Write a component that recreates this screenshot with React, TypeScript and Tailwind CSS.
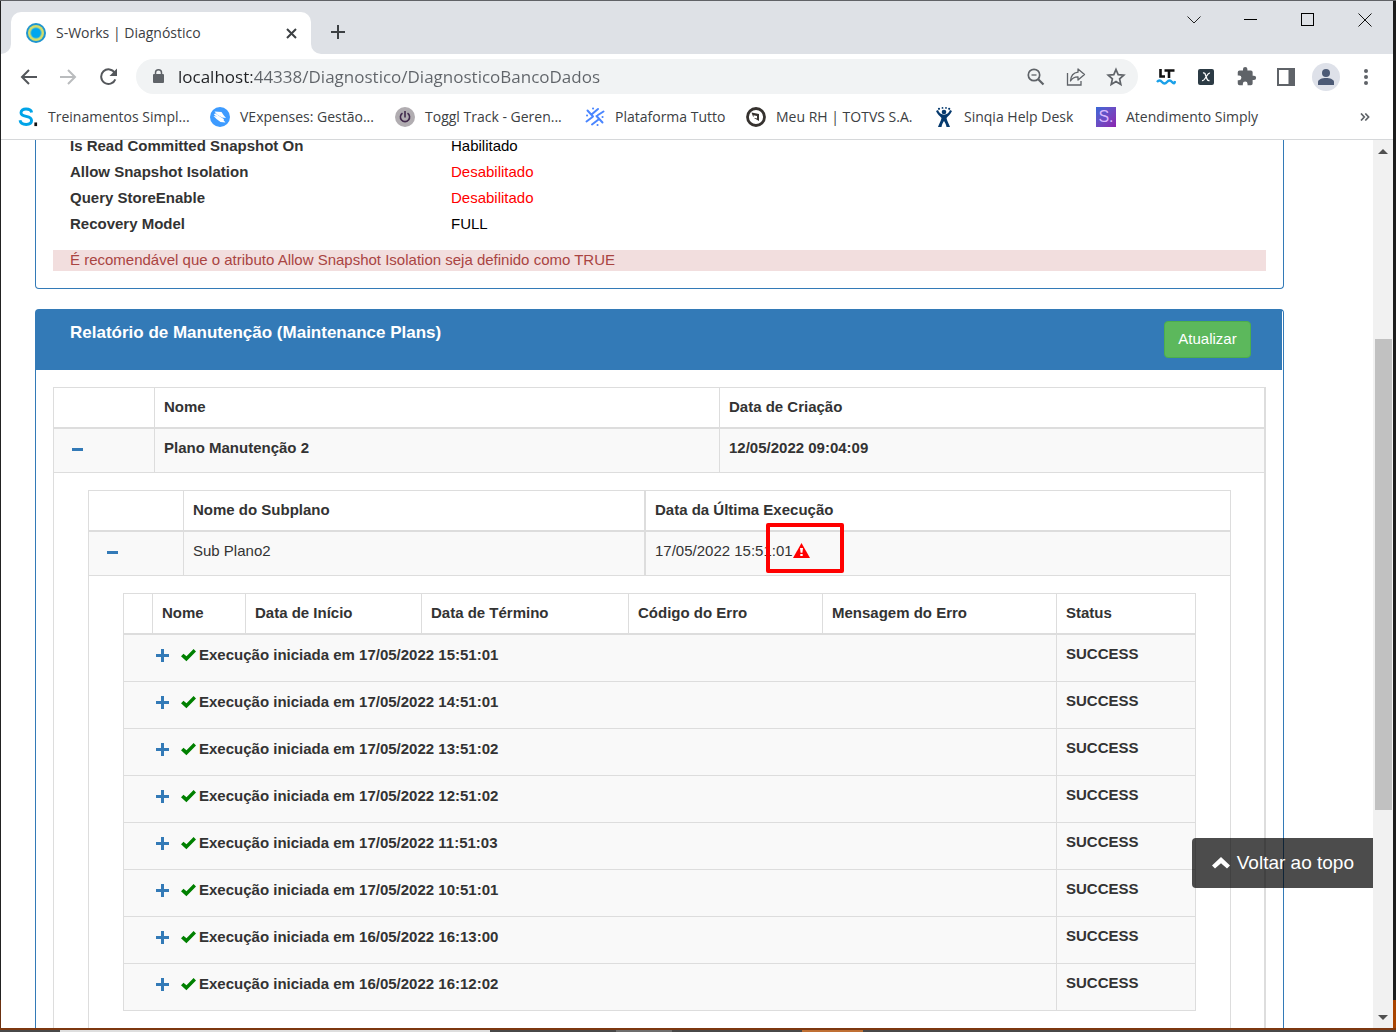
import { useState } from 'react';
import type { ReactNode } from 'react';

const executions = [
  '17/05/2022 15:51:01',
  '17/05/2022 14:51:01',
  '17/05/2022 13:51:02',
  '17/05/2022 12:51:02',
  '17/05/2022 11:51:03',
  '17/05/2022 10:51:01',
  '16/05/2022 16:13:00',
  '16/05/2022 16:12:02',
];

const settings = [
  { label: 'Is Read Committed Snapshot On', value: 'Habilitado', ok: true },
  { label: 'Allow Snapshot Isolation', value: 'Desabilitado', ok: false },
  { label: 'Query StoreEnable', value: 'Desabilitado', ok: false },
  { label: 'Recovery Model', value: 'FULL', ok: true },
];

/* ---------- bookmark icons ---------- */

function SimplIcon() {
  return (
    <svg width="22" height="22" viewBox="0 0 22 22" fill="none">
      <path d="M15 6C14.5 3.400 12 2.200 8.800 2.200C5.500 2.200 3.300 3.700 3.300 6.200C3.300 8.900 5.700 9.600 9 10.300C12.600 11 14.900 12 14.900 14.900C14.900 17.800 12.300 19.200 9 19.200C5.400 19.200 2.700 17.700 2.200 14.700" stroke="#00a4e8" strokeWidth="3.200" />
      <rect x="18" y="17" width="3" height="4" fill="#111" />
    </svg>
  );
}

function VExpensesIcon() {
  return (
    <svg width="20" height="20" viewBox="0 0 20 20">
      <circle cx="10" cy="10" r="10" fill="#3d9bff" />
      <path d="M4.500 4.500l7 .5 2 3 2.500 3-4-.5-5-3zM3.500 9l4 .5 5 2.500 3 3.500-5-.5-4-3z" fill="#fff" />
      <path d="M4.500 7l9 6" stroke="#fff" strokeWidth="2" />
    </svg>
  );
}

function TogglIcon() {
  return (
    <svg width="20" height="20" viewBox="0 0 20 20" fill="none">
      <circle cx="10" cy="10" r="10" fill="#b1adb1" />
      <path d="M7.500 6.200a4.600 4.600 0 1 0 5 0M10 4v6.500" stroke="#412a4c" strokeWidth="1.600" />
    </svg>
  );
}

function TuttoIcon() {
  return (
    <svg width="20" height="20" viewBox="0 0 20 20" fill="none" stroke="#4a86ff" strokeWidth="2" strokeLinecap="round">
      <path d="M6.500 7.500L13 2M2.500 3.500L8 9.500M1.500 14.500L7.500 10M7 17.500l6.500-5M11.500 9l6 6.500M13 8l5.500-3.500" />
      <path d="M8 1.500h.1M17.500 10h.1M2 8.500h.1M12.500 18h.1" />
    </svg>
  );
}

function TotvsIcon() {
  return (
    <svg width="20" height="20" viewBox="0 0 20 20" fill="none">
      <circle cx="10" cy="10" r="8.500" stroke="#36322f" strokeWidth="2.800" />
      <path d="M5.500 5.500L13 7v3.500L7 9.500zM13 8v6l-5-3z" fill="#36322f" />
      <path d="M7.500 8.200l3.500.8v2.500l-3-.7z" fill="#fff" />
    </svg>
  );
}

function SinqiaIcon() {
  return (
    <svg width="20" height="20" viewBox="0 0 20 20" fill="#063a6e">
      <circle cx="10" cy="5" r="2.300" />
      <circle cx="5" cy="1.800" r="1.100" />
      <circle cx="8.500" cy=".9" r=".9" />
      <circle cx="12" cy=".9" r=".9" />
      <circle cx="15.200" cy="1.800" r="1.100" />
      <path d="M2 4c1 3 4 5 5.500 7C7 14 5 17 4 20h3.500c.5-3 1.500-4.500 2.500-6 1 1.500 2 3 2.500 6H16c-1-3-3-6-3.500-9C14 9 17 7 18 4l-2-1c-1 3-3.500 4.500-6 4.800C7.500 7.500 5 6 4 3z" />
    </svg>
  );
}

function AtendimentoIcon() {
  return (
    <span className="flex h-5 w-5 items-center justify-center bg-linear-to-br from-[#3367d6] to-[#8b1fb0] font-['Liberation_Sans',sans-serif] text-base text-[#d9b8ff]">
      S.
    </span>
  );
}

const bookmarks = [
  { label: 'Treinamentos Simpl...', icon: <SimplIcon />, width: 'w-[192px]' },
  { label: 'VExpenses: Gestão...', icon: <VExpensesIcon />, width: 'w-[185px]' },
  { label: 'Toggl Track - Geren...', icon: <TogglIcon />, width: 'w-[190px]' },
  { label: 'Plataforma Tutto', icon: <TuttoIcon />, width: 'w-[161px]' },
  { label: 'Meu RH | TOTVS S.A.', icon: <TotvsIcon />, width: 'w-[188px]' },
  { label: 'Sinqia Help Desk', icon: <SinqiaIcon />, width: 'w-[162px]' },
  { label: 'Atendimento Simply', icon: <AtendimentoIcon />, width: 'w-[170px]' },
];

/* ---------- page icons ---------- */

function MinusIcon() {
  return (
    <svg width="11" height="14" viewBox="0 0 11 14" fill="#337ab7">
      <rect y="6" width="11" height="3" />
    </svg>
  );
}

function PlusIcon() {
  return (
    <svg width="13" height="13" viewBox="0 0 13 13" fill="#337ab7">
      <path d="M5 0h3v5h5v3H8v5H5V8H0V5h5z" />
    </svg>
  );
}

function CheckIcon() {
  return (
    <svg width="15" height="13" viewBox="0 0 15 13" fill="#008000">
      <path d="M12.600 0L15 2.400 5.400 12.300 0 7.300l2.500-2.600 3 2.500z" />
    </svg>
  );
}

function WarningIcon() {
  return (
    <svg width="17" height="15" viewBox="0 0 17 15">
      <path d="M8.500 0L17 15H0z" fill="#f00" />
      <path d="M7 5h3l-.6 4.800H7.600zM7.300 11h2.400v2H7.300z" fill="#fff" />
    </svg>
  );
}

/* ---------- browser chrome ---------- */

function IconButton({ label, children, className = '' }: { label: string; children: ReactNode; className?: string }) {
  return (
    <button type="button" aria-label={label} className={`flex h-9 w-10 shrink-0 items-center justify-center ${className}`}>
      {children}
    </button>
  );
}

function TabStrip() {
  return (
    <div className="flex h-[53px] shrink-0 items-start bg-[#dee1e6]">
      <div className="flex h-full items-end">
        <div className="h-[10px] w-[10px] bg-white">
          <div className="h-full w-full rounded-br-[10px] bg-[#dee1e6]" />
        </div>
        <div className="flex h-[42px] w-[300px] items-center rounded-t-[10px] bg-white pl-[15px] pr-[10px]">
          <svg width="20" height="20" viewBox="0 0 20 20">
            <circle cx="10" cy="10" r="10" fill="#1f95cf" />
            <circle cx="10" cy="10" r="8" fill="#d3dd6a" />
            <circle cx="10" cy="10" r="5.800" fill="#5fbfc0" />
            <circle cx="10" cy="10" r="4.800" fill="#00a6ee" />
          </svg>
          <span className="grow pl-[10px] text-sm text-[#3c4043]">S-Works | Diagnóstico</span>
          <button type="button" aria-label="Fechar guia" className="flex h-5 w-5 items-center justify-center">
            <svg width="11" height="11" viewBox="0 0 11 11" stroke="#3c4043" strokeWidth="2">
              <path d="M1 1l9 9M10 1l-9 9" />
            </svg>
          </button>
        </div>
        <div className="h-[10px] w-[10px] bg-white">
          <div className="h-full w-full rounded-bl-[10px] bg-[#dee1e6]" />
        </div>
      </div>
      <button type="button" aria-label="Nova guia" className="mt-5 ml-1 flex h-[22px] w-[26px] items-center justify-center">
        <svg width="16" height="16" viewBox="0 0 16 16" stroke="#3c4043" strokeWidth="2">
          <path d="M8 1v14M1 8h14" />
        </svg>
      </button>
      <div className="ml-auto flex h-[37px] items-center">
        <button type="button" aria-label="Pesquisar guias" className="flex w-[57px] justify-center">
          <svg width="14" height="8" viewBox="0 0 14 8" fill="none" stroke="#222">
            <path d="M.5.5L7 7l6.500-6.500" />
          </svg>
        </button>
        <button type="button" aria-label="Minimizar" className="flex w-[57px] justify-center">
          <svg width="13" height="13" viewBox="0 0 13 13">
            <rect y="6" width="13" height="1" fill="#000" />
          </svg>
        </button>
        <button type="button" aria-label="Maximizar" className="flex w-[57px] justify-center">
          <svg width="13" height="13" viewBox="0 0 13 13" fill="none" stroke="#000">
            <rect x=".5" y=".5" width="12" height="12" />
          </svg>
        </button>
        <button type="button" aria-label="Fechar" className="flex w-[57px] justify-center">
          <svg width="14" height="14" viewBox="0 0 14 14" fill="none" stroke="#111">
            <path d="M.5.5l13 13M13.500.5l-13 13" />
          </svg>
        </button>
      </div>
    </div>
  );
}

function Toolbar() {
  const [url, setUrl] = useState('localhost:44338/Diagnostico/DiagnosticoBancoDados');

  return (
    <div className="flex h-[45px] shrink-0 items-center bg-white pl-[7px] pr-[7px]">
      <IconButton label="Voltar">
        <svg width="17" height="16" viewBox="0 0 17 16" fill="none" stroke="#54575b" strokeWidth="2">
          <path d="M17 8H2M9 1L2 8l7 7" />
        </svg>
      </IconButton>
      <IconButton label="Avançar">
        <svg width="17" height="16" viewBox="0 0 17 16" fill="none" stroke="#babcbe" strokeWidth="2">
          <path d="M0 8h15M8 1l7 7-7 7" />
        </svg>
      </IconButton>
      <IconButton label="Recarregar">
        <svg width="19" height="18" viewBox="0 0 19 18" fill="none">
          <path d="M15.800 5A7.300 7.300 0 1 0 16.300 11.300" stroke="#54575b" strokeWidth="2" />
          <path d="M18 .5V8h-7.500z" fill="#54575b" />
        </svg>
      </IconButton>
      <div className="ml-2 flex h-[35px] min-w-0 grow items-center rounded-full bg-[#f1f3f4] pl-4">
        <svg width="13" height="15" viewBox="0 0 13 15" className="shrink-0">
          <rect x="1" y="5" width="11" height="9" rx="1" fill="#5f6368" />
          <path d="M3.500 6V3.800a3 3 0 0 1 6 0V6" fill="none" stroke="#5f6368" strokeWidth="1.500" />
        </svg>
        <input
          type="text"
          aria-label="Endereço"
          value={url}
          onChange={(e) => setUrl(e.target.value)}
          className="ml-[13px] min-w-0 grow bg-[linear-gradient(90deg,#202124_74px,#5f6368_74px)] bg-clip-text text-[17px] text-transparent outline-none"
        />
        <IconButton label="Zoom">
          <svg width="18" height="18" viewBox="0 0 18 18" fill="none" stroke="#5f6368">
            <circle cx="7" cy="7" r="5.700" strokeWidth="1.700" />
            <path d="M11.200 11.200l5.300 5.300" strokeWidth="2.200" />
            <path d="M4.500 7h5" strokeWidth="1.300" />
          </svg>
        </IconButton>
        <IconButton label="Compartilhar">
          <svg width="20" height="18" viewBox="0 0 20 18" fill="none" stroke="#5f6368" strokeWidth="1.300">
            <path d="M1.500 5v12H15v-4" />
            <path d="M12 1l6.500 5.500L12 12V8.800C8.500 8.800 6 10 4.500 13 4.800 8 7.500 4.800 12 4.200z" strokeLinejoin="round" />
          </svg>
        </IconButton>
        <IconButton label="Favoritar">
          <svg width="20" height="20" viewBox="0 0 20 20" fill="none" stroke="#5f6368" strokeWidth="1.700">
            <path d="M10 2.500l2.200 5.200 5.600.5-4.200 3.700 1.200 5.500-4.800-2.900-4.800 2.900 1.200-5.500-4.200-3.700 5.600-.5z" />
          </svg>
        </IconButton>
        <span className="w-[2px]" />
      </div>
      <IconButton label="LanguageTool" className="ml-2">
        <svg width="20" height="18" viewBox="0 0 20 18" fill="none" stroke="#111" strokeWidth="2.600">
          <path d="M4.500 1v7.500H9M8.500 2.500h10M13 2.500V10" />
          <path d="M1 14q2.500-3 5 0t5 0 5 0 3-1" stroke="#1ba0e8" strokeWidth="2.400" />
        </svg>
      </IconButton>
      <IconButton label="Extensão X">
        <svg width="16" height="16" viewBox="0 0 16 16" fill="none">
          <rect width="16" height="16" rx="2" fill="#2c3b45" />
          <path d="M5 4q2-.5 2.500 2L9 10q.6 2 2.500 1.500M12 4.200Q10.500 3.800 9 6.500L7 9.500Q5.500 12 4 11.600" stroke="#fff" strokeWidth="1.300" />
        </svg>
      </IconButton>
      <IconButton label="Extensões">
        <svg width="21" height="21" viewBox="0 0 24 24" fill="#5f6368">
          <path d="M20.500 11H19V7a2 2 0 0 0-2-2h-4V3.500a2.500 2.500 0 0 0-5 0V5H4a2 2 0 0 0-2 2v3.800h1.500a2.700 2.700 0 0 1 0 5.400H2V20a2 2 0 0 0 2 2h3.800v-1.500a2.700 2.700 0 0 1 5.400 0V22H17a2 2 0 0 0 2-2v-4h1.500a2.500 2.500 0 0 0 0-5z" />
        </svg>
      </IconButton>
      <IconButton label="Painel lateral">
        <svg width="18" height="18" viewBox="0 0 18 18" fill="none" stroke="#5f6368">
          <rect x="1" y="1" width="16" height="16" strokeWidth="2" />
          <rect x="12" y="1" width="5" height="16" fill="#5f6368" />
        </svg>
      </IconButton>
      <IconButton label="Perfil">
        <svg width="28" height="28" viewBox="0 0 28 28" fill="#4c5a75">
          <circle cx="14" cy="14" r="14" fill="#dee1e9" />
          <circle cx="14" cy="10" r="4" />
          <path d="M6 22v-3c0-2.500 4-4 8-4s8 1.500 8 4v3z" />
        </svg>
      </IconButton>
      <IconButton label="Menu">
        <svg width="4" height="18" viewBox="0 0 4 18" fill="#5f6368">
          <circle cx="2" cy="3" r="2" />
          <circle cx="2" cy="9" r="2" />
          <circle cx="2" cy="15" r="2" />
        </svg>
      </IconButton>
    </div>
  );
}

function BookmarksBar() {
  return (
    <nav className="flex h-[41px] shrink-0 items-center border-b border-[#d6d8da] bg-white pb-1 pl-[17px] pr-[23px] text-[#3c4043]">
      {bookmarks.map((b) => (
        <a key={b.label} href="#" className={`flex shrink-0 items-center gap-[10px] text-sm whitespace-nowrap ${b.width}`}>
          <span className="flex w-5 shrink-0 justify-center">{b.icon}</span>
          {b.label}
        </a>
      ))}
      <button type="button" aria-label="Mais favoritos" className="ml-auto">
        <svg width="10" height="8" viewBox="0 0 10 8" fill="none" stroke="#5f6368" strokeWidth="1.700">
          <path d="M1 .5L4.300 4 1 7.500M5.300.5L8.600 4 5.300 7.500" />
        </svg>
      </button>
    </nav>
  );
}

/* ---------- report ---------- */

function ExecutionsTable() {
  return (
    <table className="w-full table-fixed border-separate border-spacing-0 border-t border-l border-[#ddd]">
      <thead>
        <tr className="h-[41px] text-left align-top font-bold">
          <th className="w-[29px] border-r border-b-2 border-[#ddd]" />
          <th className="w-[93px] border-r border-b-2 border-[#ddd] px-[9px] py-2">Nome</th>
          <th className="w-[176px] border-r border-b-2 border-[#ddd] px-[9px] py-2">Data de Início</th>
          <th className="w-[207px] border-r border-b-2 border-[#ddd] px-[9px] py-2">Data de Término</th>
          <th className="w-[194px] border-r border-b-2 border-[#ddd] px-[9px] py-2">Código do Erro</th>
          <th className="w-[234px] border-r border-b-2 border-[#ddd] px-[9px] py-2">Mensagem do Erro</th>
          <th className="border-r border-b-2 border-[#ddd] px-[9px] py-2">Status</th>
        </tr>
      </thead>
      <tbody>
        {executions.map((date) => (
          <tr key={date} className="h-[47px] bg-[#f9f9f9] align-top font-bold">
            <td colSpan={6} className="border-r border-b border-[#ddd] pt-[9px]">
              <div className="flex items-center">
                <button type="button" aria-label="Expandir execução" className="pl-8 pr-3">
                  <PlusIcon />
                </button>
                <CheckIcon />
                <span className="pl-[3px]">Execução iniciada em {date}</span>
              </div>
            </td>
            <td className="border-r border-b border-[#ddd] px-[9px] pt-2">SUCCESS</td>
          </tr>
        ))}
      </tbody>
    </table>
  );
}

function SubplansTable() {
  return (
    <table className="w-full table-fixed border-separate border-spacing-0 border-t border-l border-[#ddd]">
      <thead>
        <tr className="h-[41px] text-left align-top font-bold">
          <th className="w-[95px] border-r border-b-2 border-[#ddd]" />
          <th className="w-[462px] border-r-2 border-b-2 border-[#ddd] px-[9px] py-2">Nome do Subplano</th>
          <th className="border-r border-b-2 border-[#ddd] px-[9px] py-2">Data da Última Execução</th>
        </tr>
      </thead>
      <tbody>
        <tr className="h-[44px] bg-[#f9f9f9] align-top">
          <td className="border-r border-b border-[#ddd] pt-[13px] pl-[18px]">
            <button type="button" aria-label="Recolher subplano" className="block">
              <MinusIcon />
            </button>
          </td>
          <td className="border-r-2 border-b border-[#ddd] px-[9px] py-2">Sub Plano2</td>
          <td className="border-r border-b border-[#ddd] px-[9px] py-2">
            <div className="flex items-center">
              17/05/2022 15:51:01
              <span className="relative pb-[2px]">
                <WarningIcon />
                <span className="pointer-events-none absolute -top-5 -left-[27px] h-[50px] w-[78px] rounded-[2px] border-4 border-[#f00]" />
              </span>
            </div>
          </td>
        </tr>
        <tr>
          <td colSpan={3} className="border-r border-[#ddd] pt-[17px] pr-[34px] pb-[34px] pl-[34px]">
            <ExecutionsTable />
          </td>
        </tr>
      </tbody>
    </table>
  );
}

function PlansTable() {
  return (
    <table className="w-full table-fixed border-separate border-spacing-0 border-t border-l border-[#ddd]">
      <thead>
        <tr className="h-[41px] text-left align-top font-bold">
          <th className="w-[101px] border-r border-b-2 border-[#ddd]" />
          <th className="w-[565px] border-r border-b-2 border-[#ddd] px-[9px] py-2">Nome</th>
          <th className="border-r-2 border-b-2 border-[#ddd] px-[9px] py-2">Data de Criação</th>
        </tr>
      </thead>
      <tbody>
        <tr className="h-[44px] bg-[#f9f9f9] align-top font-bold">
          <td className="border-r border-b border-[#ddd] pt-[13px] pl-[18px]">
            <button type="button" aria-label="Recolher plano" className="block">
              <MinusIcon />
            </button>
          </td>
          <td className="border-r border-b border-[#ddd] px-[9px] py-2">Plano Manutenção 2</td>
          <td className="border-r-2 border-b border-[#ddd] px-[9px] py-2">12/05/2022 09:04:09</td>
        </tr>
        <tr>
          <td colSpan={3} className="border-r-2 border-[#ddd] pt-[17px] pr-[33px] pb-[34px] pl-[34px]">
            <SubplansTable />
          </td>
        </tr>
      </tbody>
    </table>
  );
}

function DatabaseReport() {
  return (
    <main className="min-w-0 grow overflow-hidden bg-white pr-[89px] pl-[34px] font-['Liberation_Sans',Arial,sans-serif] text-[15px] leading-[22px] text-[#333]">
      <section className="-mt-[7px] rounded-b border border-t-0 border-[#337ab7] px-[17px] pb-[17px]">
        <dl className="pl-[17px]">
          {settings.map((s) => (
            <div key={s.label} className="flex h-[26px] items-center leading-4">
              <dt className="w-[381px] font-bold">{s.label}</dt>
              <dd className={s.ok ? 'text-black' : 'text-[#f00]'}>{s.value}</dd>
            </div>
          ))}
        </dl>
        <p className="mt-[13px] h-[21px] bg-[#f2dede] pl-[17px] leading-[20px] text-[#a94442]">
          É recomendável que o atributo Allow Snapshot Isolation seja definido como TRUE
        </p>
      </section>

      <section className="mt-5 rounded-t border border-b-0 border-[#337ab7]">
        <header className="mr-px flex h-[60px] items-start justify-between bg-[#337ab7] pt-[11px] pr-[31px] pl-[34px] text-white">
          <h2 className="text-[17px] leading-6 font-bold">Relatório de Manutenção (Maintenance Plans)</h2>
          <button type="button" className="h-[37px] w-[87px] rounded border border-[#4cae4c] bg-[#5cb85c] pb-[2px]">
            Atualizar
          </button>
        </header>
        <div className="p-[17px]">
          <PlansTable />
        </div>
      </section>
    </main>
  );
}

function ScrollBar() {
  return (
    <div className="flex w-5 shrink-0 flex-col items-center bg-[#f1f1f1] pt-[7px] pb-[6px]">
      <svg width="10" height="8" viewBox="0 0 10 8">
        <path d="M0 7l5-5 5 5z" fill="#505050" />
      </svg>
      <div className="flex w-full grow flex-col py-[10px] pl-[2px] pr-px">
        <div className="grow-[174]" />
        <div className="grow-[471] bg-[#c1c1c1]" />
        <div className="grow-[194]" />
      </div>
      <svg width="10" height="8" viewBox="0 0 10 8">
        <path d="M0 1l5 5 5-5z" fill="#505050" />
      </svg>
    </div>
  );
}

export default function App() {
  return (
    <div className="flex h-screen flex-col overflow-hidden bg-[#484848] font-['Open_Sans','Noto_Sans',sans-serif]">
      <div className="flex min-h-0 grow border-t border-[#606266]">
        <div className="flex w-px shrink-0 flex-col bg-[#222]">
          <div className="mt-auto h-7 bg-[#6b3010]" />
        </div>
        <div className="flex min-w-0 grow flex-col">
          <TabStrip />
          <Toolbar />
          <BookmarksBar />
          <div className="relative flex min-h-0 grow">
            <DatabaseReport />
            <ScrollBar />
            <a
              href="#"
              className="absolute right-5 bottom-[140px] flex h-[50px] items-center gap-[7px] rounded-l bg-black/70 pr-[19px] pl-5 font-['Liberation_Sans',Arial,sans-serif] text-[19px] text-white"
            >
              <svg width="18" height="12" viewBox="0 0 18 12" fill="#fff">
                <path d="M9 0l9 8.600-3 3-6-5.400-6 5.400-3-3z" />
              </svg>
              Voltar ao topo
            </a>
          </div>
        </div>
        <div className="flex w-[3px] shrink-0 flex-col bg-[#1c1c1c]">
          <div className="mt-auto h-7 bg-[#a84300]" />
        </div>
      </div>
      <div className="h-[2px] shrink-0 bg-[#7d3810]" />
      <div className="flex h-[2px] shrink-0">
        <div className="w-[60px]" />
        <div className="w-[430px] bg-[#dedede]" />
        <div className="ml-[126px] w-14 bg-[#6e6e6e]" />
        <div className="ml-[130px] w-[61px] bg-[#c07034]" />
      </div>
    </div>
  );
}
